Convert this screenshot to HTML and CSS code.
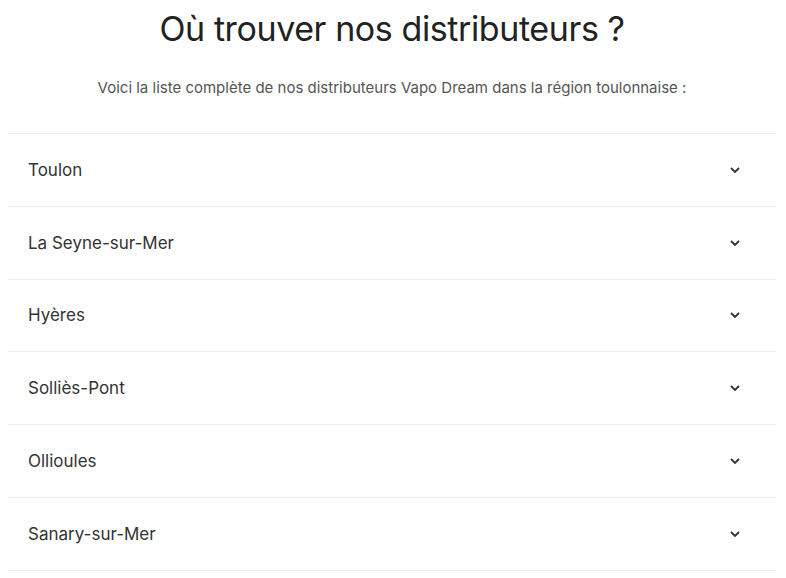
FILE: index.html
```html
<!DOCTYPE html>
<html lang="fr">
<head>
<meta charset="utf-8">
<link rel="stylesheet" href="styles.css">
</head>
<body>
<main class="page">
  <h1 class="title">Où trouver nos distributeurs ?</h1>
  <p class="intro">Voici la liste complète de nos distributeurs Vapo Dream dans la région toulonnaise :</p>
  <div class="accordion">
    <div class="item"><span class="label">Toulon</span><svg class="chev" viewBox="0 0 10 6" width="10" height="6"><path d="M1 1l4 4 4-4" fill="none" stroke="#333" stroke-width="1.8"/></svg></div>
    <div class="item"><span class="label">La Seyne-sur-Mer</span><svg class="chev" viewBox="0 0 10 6" width="10" height="6"><path d="M1 1l4 4 4-4" fill="none" stroke="#333" stroke-width="1.8"/></svg></div>
    <div class="item"><span class="label">Hyères</span><svg class="chev" viewBox="0 0 10 6" width="10" height="6"><path d="M1 1l4 4 4-4" fill="none" stroke="#333" stroke-width="1.8"/></svg></div>
    <div class="item"><span class="label">Solliès-Pont</span><svg class="chev" viewBox="0 0 10 6" width="10" height="6"><path d="M1 1l4 4 4-4" fill="none" stroke="#333" stroke-width="1.8"/></svg></div>
    <div class="item"><span class="label">Ollioules</span><svg class="chev" viewBox="0 0 10 6" width="10" height="6"><path d="M1 1l4 4 4-4" fill="none" stroke="#333" stroke-width="1.8"/></svg></div>
    <div class="item"><span class="label">Sanary-sur-Mer</span><svg class="chev" viewBox="0 0 10 6" width="10" height="6"><path d="M1 1l4 4 4-4" fill="none" stroke="#333" stroke-width="1.8"/></svg></div>
  </div>
</main>
</body>
</html>
```
FILE: styles.css
```css
html, body {
  margin: 0;
  padding: 0;
  background: #fff;
}
body {
  font-family: Inter, "Noto Sans", "Liberation Sans", sans-serif;
  color: #222;
}
.page {
  width: 768px;
  margin: 0 0 0 8px;
}
.title {
  margin: 0;
  padding-top: 8px;
  font-size: 34px;
  font-weight: 400;
  line-height: 42px;
  letter-spacing: -0.4px;
  text-align: center;
  color: #222;
}
.intro {
  margin: 28px 0 0;
  font-size: 15px;
  line-height: 20px;
  text-align: center;
  color: #555;
}
.accordion {
  margin-top: 35px;
  border-top: 1px solid #ececec;
}
.item {
  display: flex;
  align-items: center;
  justify-content: space-between;
  height: 71.8px;
  padding: 0 36px 0 20px;
  border-bottom: 1px solid #ececec;
}
.label {
  font-size: 17px;
  color: #333;
}
.chev {
  display: block;
}
```
